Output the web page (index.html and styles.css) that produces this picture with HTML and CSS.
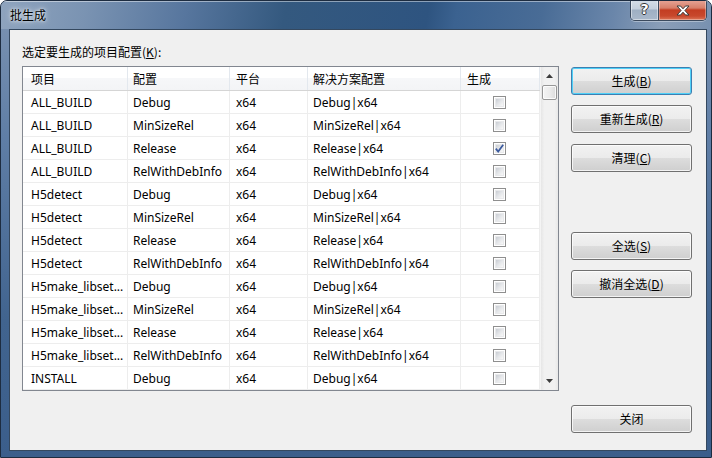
FILE: index.html
```html
<!DOCTYPE html>
<html lang="zh-CN">
<head>
<meta charset="utf-8">
<title>批生成</title>
<link rel="stylesheet" href="styles.css">
</head>
<body>
<div class="window">
  <div class="titlebar">
    <span class="title">批生成</span>
    <div class="caption">
      <div class="cap-help">?</div>
      <div class="cap-close">
        <svg width="14" height="11" viewBox="0 0 14 11"><path d="M1 1 H4.5 L7 3.8 L9.5 1 H13 L8.9 5.5 L13 10 H9.5 L7 7.2 L4.5 10 H1 L5.1 5.5 Z" fill="#fff" stroke="#3a3a3a" stroke-width="1" stroke-linejoin="round"/></svg>
      </div>
    </div>
  </div>
  <div class="client">
    <div class="left">
      <div class="label">选定要生成的项目配置(<u>K</u>):</div>
      <div class="list">
        <div class="grid">
          <div class="row head">
            <div class="c c1">项目</div><div class="c c2">配置</div><div class="c c3">平台</div><div class="c c4">解决方案配置</div><div class="c c5">生成</div>
          </div>
          <div class="row"><div class="c c1">ALL_BUILD</div><div class="c c2">Debug</div><div class="c c3">x64</div><div class="c c4">Debug|x64</div><div class="c c5"><span class="chk"></span></div></div>
          <div class="row"><div class="c c1">ALL_BUILD</div><div class="c c2">MinSizeRel</div><div class="c c3">x64</div><div class="c c4">MinSizeRel|x64</div><div class="c c5"><span class="chk"></span></div></div>
          <div class="row"><div class="c c1">ALL_BUILD</div><div class="c c2">Release</div><div class="c c3">x64</div><div class="c c4">Release|x64</div><div class="c c5"><span class="chk on"><svg width="9" height="9" viewBox="0 0 9 9"><path d="M0.8 4.6 L3.2 7.6 L8.2 0.8" fill="none" stroke="#3b5a9e" stroke-width="1.7"/></svg></span></div></div>
          <div class="row"><div class="c c1">ALL_BUILD</div><div class="c c2">RelWithDebInfo</div><div class="c c3">x64</div><div class="c c4">RelWithDebInfo|x64</div><div class="c c5"><span class="chk"></span></div></div>
          <div class="row"><div class="c c1">H5detect</div><div class="c c2">Debug</div><div class="c c3">x64</div><div class="c c4">Debug|x64</div><div class="c c5"><span class="chk"></span></div></div>
          <div class="row"><div class="c c1">H5detect</div><div class="c c2">MinSizeRel</div><div class="c c3">x64</div><div class="c c4">MinSizeRel|x64</div><div class="c c5"><span class="chk"></span></div></div>
          <div class="row"><div class="c c1">H5detect</div><div class="c c2">Release</div><div class="c c3">x64</div><div class="c c4">Release|x64</div><div class="c c5"><span class="chk"></span></div></div>
          <div class="row"><div class="c c1">H5detect</div><div class="c c2">RelWithDebInfo</div><div class="c c3">x64</div><div class="c c4">RelWithDebInfo|x64</div><div class="c c5"><span class="chk"></span></div></div>
          <div class="row"><div class="c c1">H5make_libset...</div><div class="c c2">Debug</div><div class="c c3">x64</div><div class="c c4">Debug|x64</div><div class="c c5"><span class="chk"></span></div></div>
          <div class="row"><div class="c c1">H5make_libset...</div><div class="c c2">MinSizeRel</div><div class="c c3">x64</div><div class="c c4">MinSizeRel|x64</div><div class="c c5"><span class="chk"></span></div></div>
          <div class="row"><div class="c c1">H5make_libset...</div><div class="c c2">Release</div><div class="c c3">x64</div><div class="c c4">Release|x64</div><div class="c c5"><span class="chk"></span></div></div>
          <div class="row"><div class="c c1">H5make_libset...</div><div class="c c2">RelWithDebInfo</div><div class="c c3">x64</div><div class="c c4">RelWithDebInfo|x64</div><div class="c c5"><span class="chk"></span></div></div>
          <div class="row"><div class="c c1">INSTALL</div><div class="c c2">Debug</div><div class="c c3">x64</div><div class="c c4">Debug|x64</div><div class="c c5"><span class="chk"></span></div></div>
        </div>
        <div class="scrollbar">
          <div class="sb-btn"><svg width="7" height="4" viewBox="0 0 7 4"><path d="M0 4 L3.5 0 L7 4 Z" fill="#3c3c3c"/></svg></div>
          <div class="sb-thumb"></div>
          <div class="sb-track"></div>
          <div class="sb-btn"><svg width="7" height="4" viewBox="0 0 7 4"><path d="M0 0 L7 0 L3.5 4 Z" fill="#3c3c3c"/></svg></div>
        </div>
      </div>
    </div>
    <div class="buttons">
      <div class="btn default b1">生成(<u>B</u>)</div>
      <div class="btn b2">重新生成(<u>R</u>)</div>
      <div class="btn b3">清理(<u>C</u>)</div>
      <div class="btn b4">全选(<u>S</u>)</div>
      <div class="btn b5">撤消全选(<u>D</u>)</div>
      <div class="btn b6">关闭</div>
    </div>
  </div>
</div>
</body>
</html>
```
FILE: styles.css
```css
html, body {
  margin: 0;
  padding: 0;
}
body {
  width: 712px;
  height: 458px;
  overflow: hidden;
  background: #ffffff;
  font-family: "Noto Sans", "Noto Sans CJK SC", sans-serif;
  font-size: 12px;
  color: #000;
}
.window {
  box-sizing: border-box;
  width: 712px;
  height: 458px;
  border: 1px solid #1d2c40;
  border-radius: 7px 7px 0 0;
  background: linear-gradient(to bottom, #7d94b2 0%, #5f7ea6 30%, #41648f 70%, #3b5e8b 100%);
  display: flex;
  flex-direction: column;
  overflow: hidden;
}
.titlebar {
  height: 28px;
  flex: none;
  display: flex;
  justify-content: space-between;
  align-items: flex-start;
  background: linear-gradient(100deg, #8fa4be 0%, #7a93b2 12%, #57769e 26%, #34597f 40%, #2e5480 60%, #3b6290 64%, #496c96 76%, #6a86aa 86%, #8a9eb8 93%, #7891b0 100%);
  box-shadow: inset 0 1px 0 rgba(255,255,255,0.45);
}
.title {
  padding-left: 9px;
  line-height: 28px;
  font-family: "Noto Sans CJK SC", sans-serif;
  font-size: 12px;
  color: #000;
  text-shadow: 0 0 6px rgba(255,255,255,0.9), 0 0 3px rgba(255,255,255,0.8);
}
.caption {
  display: flex;
  margin-top: -1px;
  margin-right: 4px;
  height: 20px;
  border: 1px solid #3b4a5e;
  border-top: none;
  border-radius: 0 0 5px 5px;
  overflow: hidden;
  box-shadow: 0 1px 0 rgba(255,255,255,0.35);
}
.cap-help {
  width: 27px;
  height: 20px;
  border-right: 1px solid #3b4a5e;
  background: linear-gradient(to bottom, #d5dee8 0%, #c4d0dd 45%, #9eafc3 50%, #aab9cb 100%);
  box-shadow: inset 0 0 0 1px rgba(255,255,255,0.45);
  color: #fff;
  font-family: "DejaVu Sans", sans-serif;
  font-weight: bold;
  font-size: 14px;
  line-height: 19px;
  text-align: center;
  text-shadow: -1px 0 0 #333, 1px 0 0 #333, 0 -1px 0 #333, 0 1px 0 #333;
}
.cap-close {
  width: 47px;
  height: 20px;
  display: flex;
  align-items: center;
  justify-content: center;
  background: linear-gradient(to bottom, #e7a698 0%, #d77f6a 40%, #c33d22 50%, #c8482c 80%, #dc7658 100%);
  box-shadow: inset 0 0 0 1px rgba(255,255,255,0.35);
}
.client {
  flex: 1;
  margin: 0 4px 6px 8px;
  border: 1px solid #34485f;
  background: #f0f0f0;
  display: flex;
  align-items: flex-start;
}
.left {
  padding-left: 12px;
}
.label {
  padding-top: 14px;
  line-height: 16px;
  height: 16px;
  font-family: "Noto Sans CJK SC", sans-serif;
}
u {
  text-decoration-thickness: 1px;
  text-underline-offset: 1px;
}
.list {
  margin-top: 6px;
  width: 537px;
  height: 325px;
  box-sizing: border-box;
  border: 1px solid #828790;
  background: #fff;
  display: flex;
}
.grid {
  width: 517px;
  display: flex;
  flex-direction: column;
}
.row {
  display: flex;
  height: 23px;
  box-sizing: border-box;
  border-bottom: 1px solid #ededed;
}
.row.head {
  height: 24px;
  border-bottom: 1px solid #d5d5d5;
  background: linear-gradient(to bottom, #ffffff 0%, #ffffff 50%, #f6f7f9 50%, #f3f4f6 100%);
  font-family: "Noto Sans CJK SC", sans-serif;
}
.c {
  box-sizing: border-box;
  border-right: 1px solid #ededed;
  padding-left: 6px;
  padding-top: 1px;
  line-height: 22px;
  white-space: nowrap;
  overflow: hidden;
  text-overflow: ellipsis;
}
.head .c {
  border-right-color: #e3e8ee;
  padding-top: 0;
  line-height: 24px;
}
.c1 { width: 105px; padding-left: 8px; padding-right: 2px; }
.c2 { width: 102px; padding-left: 5px; }
.c3 { width: 78px; }
.c4 { width: 153px; padding-left: 5px; }
.c5 {
  width: 79px;
  display: flex;
  align-items: center;
  padding-left: 32px;
  padding-top: 0;
}
.head .c5 { padding-left: 6px; }
.chk {
  width: 13px;
  height: 13px;
  box-sizing: border-box;
  border: 1px solid #8f8f8f;
  background: #fff;
  padding: 1px;
  display: flex;
  position: relative;
}
.chk::before {
  content: "";
  flex: 1;
  background: linear-gradient(135deg, #c9cdd3 0%, #e4e6e9 50%, #f8f8f8 100%);
  border: 1px solid #e8e9eb;
}
.chk.on svg {
  position: absolute;
  left: 1px;
  top: 1px;
}
.scrollbar {
  width: 18px;
  display: flex;
  flex-direction: column;
  background: linear-gradient(to right, #e6e6e6 0%, #f1f1f1 20%, #f1f1f1 80%, #e8e8e8 100%);
  border-left: 1px solid #f4f4f4;
  box-sizing: border-box;
}
.sb-btn {
  height: 18px;
  display: flex;
  align-items: center;
  justify-content: center;
  flex: none;
}
.sb-thumb {
  height: 15px;
  margin: 0 1px 0 1px;
  box-sizing: border-box;
  border: 1px solid #979797;
  border-radius: 2px;
  background: linear-gradient(to right, #f4f4f4 0%, #ececec 50%, #dcdcdc 100%);
  box-shadow: inset 0 0 0 1px rgba(255,255,255,0.8);
  flex: none;
}
.sb-track {
  flex: 1;
}
.buttons {
  margin-left: 12px;
  display: flex;
  flex-direction: column;
}
.btn {
  width: 121px;
  height: 28px;
  box-sizing: border-box;
  border: 1px solid #707070;
  border-radius: 3px;
  background: linear-gradient(to bottom, #f2f2f2 0%, #ebebeb 50%, #dddddd 50%, #cfcfcf 100%);
  box-shadow: inset 0 0 0 1px rgba(255,255,255,0.75);
  text-align: center;
  line-height: 25px;
  font-family: "Noto Sans CJK SC", sans-serif;
  font-size: 12px;
}
.btn.default {
  border-color: #3c7fb1;
  box-shadow: inset 0 0 0 1px #4fd0f8;
}
.b1 { margin-top: 37px; }
.b2 { margin-top: 10px; }
.b3 { margin-top: 11px; }
.b4 { margin-top: 60px; }
.b5 { margin-top: 10px; }
.b6 { margin-top: 107px; }
```
